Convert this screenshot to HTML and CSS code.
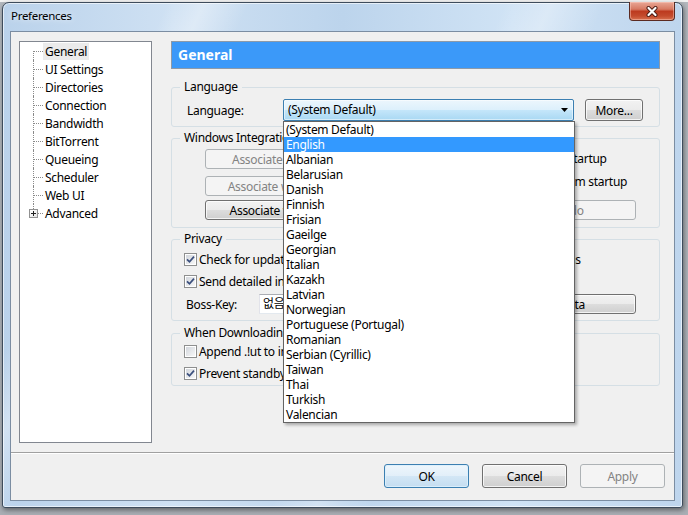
FILE: index.html
```html
<!DOCTYPE html>
<html lang="en">
<head>
<meta charset="utf-8">
<title>Preferences</title>
<link rel="stylesheet" href="styles.css">
</head>
<body>
<div class="window">
  <div class="titlebar">
    <span class="title">Preferences</span>
    <button class="close" type="button" aria-label="Close">
      <svg width="14" height="11" viewBox="0 0 14 11"><path d="M3.5 2 L10.5 9 M10.5 2 L3.5 9" fill="none" stroke="#4a1a12" stroke-width="4" stroke-linecap="round"/><path d="M3.5 2 L10.5 9 M10.5 2 L3.5 9" fill="none" stroke="#ffffff" stroke-width="2.2" stroke-linecap="round"/></svg>
    </button>
  </div>
  <div class="client">
    <div class="main">
      <div class="tree">
        <div class="node first"><span class="branch"></span><span class="node-label sel">General</span></div>
        <div class="node"><span class="branch"></span><span class="node-label">UI Settings</span></div>
        <div class="node"><span class="branch"></span><span class="node-label">Directories</span></div>
        <div class="node"><span class="branch"></span><span class="node-label">Connection</span></div>
        <div class="node"><span class="branch"></span><span class="node-label">Bandwidth</span></div>
        <div class="node"><span class="branch"></span><span class="node-label">BitTorrent</span></div>
        <div class="node"><span class="branch"></span><span class="node-label">Queueing</span></div>
        <div class="node"><span class="branch"></span><span class="node-label">Scheduler</span></div>
        <div class="node"><span class="branch"></span><span class="node-label">Web UI</span></div>
        <div class="node last"><span class="branch"><span class="plus"><svg width="9" height="9" viewBox="0 0 9 9"><path d="M2 4.5 H7 M4.5 2 V7" stroke="#1f1f1f" stroke-width="1"/></svg></span></span><span class="node-label">Advanced</span></div>
      </div>

      <div class="panel">
        <div class="panel-header">General</div>

        <div class="group g-lang">
          <div class="group-title">Language</div>
          <div class="lang-row">
            <span class="lang-label">Language:</span>
            <div class="combo">
              <span class="combo-text">(System Default)</span>
              <svg class="combo-arrow" width="7" height="4" viewBox="0 0 7 4"><path d="M0 0 H7 L3.5 4 Z" fill="#000"/></svg>
              <ul class="dropdown">
                <li>(System Default)</li>
                <li class="hl">English</li>
                <li>Albanian</li>
                <li>Belarusian</li>
                <li>Danish</li>
                <li>Finnish</li>
                <li>Frisian</li>
                <li>Gaeilge</li>
                <li>Georgian</li>
                <li>Italian</li>
                <li>Kazakh</li>
                <li>Latvian</li>
                <li>Norwegian</li>
                <li>Portuguese (Portugal)</li>
                <li>Romanian</li>
                <li>Serbian (Cyrillic)</li>
                <li>Taiwan</li>
                <li>Thai</li>
                <li>Turkish</li>
                <li>Valencian</li>
              </ul>
            </div>
            <button class="btn more" type="button">More...</button>
          </div>
        </div>

        <div class="group g-wi">
          <div class="group-title">Windows Integration</div>
          <div class="wi-cols">
            <div class="wi-left">
              <button class="btn dis wi-btn" type="button">Associate with .torrent files</button>
              <button class="btn dis wi-btn b2" type="button">Associate with .btsearch files</button>
              <button class="btn wi-btn b3" type="button">Associate with magnet URIs</button>
            </div>
            <div class="wi-right">
              <div class="check"><span class="cb"><svg width="9" height="9" viewBox="0 0 9 9"><path d="M1 4.3 L3.5 6.8 L8 1.6" fill="none" stroke="#3b4f7d" stroke-width="1.7"/></svg></span><span class="ctext">Check association on startup</span></div>
              <div class="check r2"><span class="cb"></span><span class="ctext">Start µTorrent on system startup</span></div>
              <button class="btn dis full r3" type="button">Association Undo</button>
            </div>
          </div>
        </div>

        <div class="group g-priv">
          <div class="group-title">Privacy</div>
          <div class="prow p1">
            <div class="check left"><span class="cb"><svg width="9" height="9" viewBox="0 0 9 9"><path d="M1 4.3 L3.5 6.8 L8 1.6" fill="none" stroke="#3b4f7d" stroke-width="1.7"/></svg></span><span class="ctext">Check for updates automatically</span></div>
            <div class="check"><span class="cb"></span><span class="ctext">Update to beta versions</span></div>
          </div>
          <div class="prow p2">
            <div class="check left"><span class="cb"><svg width="9" height="9" viewBox="0 0 9 9"><path d="M1 4.3 L3.5 6.8 L8 1.6" fill="none" stroke="#3b4f7d" stroke-width="1.7"/></svg></span><span class="ctext">Send detailed info when checking for updates</span></div>
            <div></div>
          </div>
          <div class="prow p3">
            <div class="boss"><span class="boss-label">Boss-Key:</span><span class="hotkey">없음</span></div>
            <div class="right-btn"><button class="btn full" type="button">Clear Private Data</button></div>
          </div>
        </div>

        <div class="group g-dl">
          <div class="group-title">When Downloading</div>
          <div class="check left d1"><span class="cb"></span><span class="ctext">Append .!ut to incomplete files</span></div>
          <div class="check left d2"><span class="cb"><svg width="9" height="9" viewBox="0 0 9 9"><path d="M1 4.3 L3.5 6.8 L8 1.6" fill="none" stroke="#3b4f7d" stroke-width="1.7"/></svg></span><span class="ctext">Prevent standby if active torrents</span></div>
        </div>
      </div>
    </div>

    <div class="sep"></div>
    <div class="footer">
      <button class="btn foot default" type="button">OK</button>
      <button class="btn foot" type="button">Cancel</button>
      <button class="btn foot dis" type="button">Apply</button>
    </div>
  </div>
</div>
</body>
</html>
```

FILE: styles.css
```css
* { box-sizing: border-box; }

html, body { margin: 0; padding: 0; }

body {
  width: 688px;
  height: 515px;
  overflow: hidden;
  background: linear-gradient(#f2f2f2 0, #f2f2f2 2px, #b3b8be 2px, #a9aeb4 100%);
  font-family: "Noto Sans", "Noto Sans CJK KR", sans-serif;
  font-size: 12px;
  letter-spacing: -0.3px;
  color: #000;
}

.window {
  margin: 2px 0 0 2px;
  width: 681px;
  height: 506px;
  border: 1px solid #3e4c5c;
  border-radius: 7px 7px 3px 3px;
  padding: 0 7px 6px;
  display: flex;
  flex-direction: column;
  background:
    linear-gradient(115deg, rgba(255,255,255,0) 0 18%, rgba(255,255,255,.35) 22%, rgba(255,255,255,0) 27%, rgba(255,255,255,0) 55%, rgba(255,255,255,.3) 60%, rgba(255,255,255,0) 66%),
    linear-gradient(to right, #bad2eb, #cfe1f3 25%, #bcd4ec 50%, #d0e3f5 75%, #bed5ed);
  box-shadow: inset 0 0 0 1px rgba(255,255,255,.6), 1px 2px 5px rgba(0,0,0,.45);
}

.titlebar {
  height: 28px;
  display: flex;
  justify-content: space-between;
  align-items: flex-start;
}

.title {
  margin: 5px 0 0 1px;
  font-size: 11.5px;
  line-height: 16px;
  color: #000;
  text-shadow: 0 0 6px rgba(255,255,255,.9);
}

.close {
  width: 46px;
  height: 19px;
  margin-top: -1px;
  padding: 0;
  border: 1px solid #5b2a21;
  border-top: none;
  border-radius: 0 0 4px 4px;
  background: linear-gradient(#e9a796 0%, #d77962 40%, #bd3a1f 52%, #c44b2d 78%, #d8714f 100%);
  box-shadow: inset 0 0 0 1px rgba(255,210,200,.45);
  display: flex;
  align-items: center;
  justify-content: center;
}

.client {
  height: 470px;
  border: 1px solid #7b8da2;
  background: #f0f0f0;
  display: flex;
  flex-direction: column;
}

.main {
  display: flex;
  align-items: flex-start;
  gap: 19px;
  padding: 9px 14px 0 8px;
}

/* tree */
.tree {
  width: 133px;
  height: 402px;
  flex: none;
  border: 1px solid #828790;
  background: #fff;
  padding-left: 9px;
}

.node {
  height: 18px;
  display: flex;
  align-items: center;
}

.branch {
  position: relative;
  width: 14px;
  height: 18px;
  flex: none;
}

.branch::before {
  content: "";
  position: absolute;
  left: 4px;
  top: 0;
  bottom: 0;
  border-left: 1px dotted #8a8a8a;
}

.node.first .branch::before { top: 9px; }
.node.last .branch::before { bottom: 9px; }

.branch::after {
  content: "";
  position: absolute;
  left: 5px;
  right: 0;
  top: 9px;
  border-top: 1px dotted #8a8a8a;
}

.plus {
  position: absolute;
  left: 0;
  top: 5px;
  width: 9px;
  height: 9px;
  z-index: 1;
  border: 1px solid #919191;
  background: linear-gradient(135deg, #ffffff, #e4e4e4);
  display: flex;
}

.plus svg { margin: -1px; }

.node-label {
  padding: 0 2px;
  line-height: 17px;
  white-space: nowrap;
}

.node-label.sel { background: #ebebeb; }

/* right panel */
.panel {
  width: 489px;
  flex: none;
}

.panel-header {
  height: 28px;
  border: 1px solid #8d9aa8;
  background: #3b99f9;
  color: #fff;
  font-weight: 700;
  font-size: 14px;
  letter-spacing: 0;
  line-height: 25px;
  padding-left: 6px;
}

.group {
  border: 1px solid #d5dfe5;
  border-radius: 3px;
}

.group-title {
  width: max-content;
  height: 16px;
  margin: -9px 0 0 8px;
  padding: 0 4px;
  background: #f0f0f0;
  line-height: 16px;
}

.g-lang { margin-top: 18px; padding-bottom: 5px; }

.lang-row {
  margin-top: 4px;
  height: 22px;
  padding-left: 15px;
  display: flex;
  align-items: center;
}

.lang-label { width: 96px; flex: none; }

.combo {
  position: relative;
  width: 291px;
  height: 22px;
  flex: none;
  border: 1px solid #3c7fb1;
  border-radius: 2px;
  background: linear-gradient(#ecf6fd 0%, #ddf0fc 48%, #c4e6fa 52%, #a9d8f3 100%);
  box-shadow: inset 0 0 0 1px rgba(255,255,255,.5);
  padding: 0 5px 0 4px;
  display: flex;
  align-items: center;
  justify-content: space-between;
  line-height: 20px;
}

.dropdown {
  position: absolute;
  left: -1px;
  top: 21px;
  width: 292px;
  margin: 0;
  padding: 0;
  list-style: none;
  border: 1px solid #646464;
  background: #fff;
  box-shadow: 2px 2px 3px rgba(0,0,0,.3);
  z-index: 10;
}

.dropdown li {
  height: 15px;
  line-height: 15px;
  padding-left: 2px;
  white-space: nowrap;
}

.dropdown li.hl { background: #3399ff; color: #fff; }

/* buttons */
.btn {
  font-family: inherit;
  font-size: 12px;
  letter-spacing: -0.3px;
  color: #000;
  padding: 0;
  border: 1px solid #707070;
  border-radius: 3px;
  background: linear-gradient(#f2f2f2 0%, #ebebeb 50%, #dddddd 50%, #cfcfcf 100%);
  box-shadow: inset 0 0 0 1px rgba(255,255,255,.75);
  white-space: nowrap;
  overflow: hidden;
}

.btn.dis {
  border-color: #adb2b5;
  background: #f4f4f4;
  color: #838383;
  box-shadow: none;
}

.btn.default {
  border-color: #3c7fb1;
  background: linear-gradient(#eef6fc 0%, #e2eff9 50%, #d3e7f6 50%, #c5ddf0 100%);
  box-shadow: inset 0 0 0 1px rgba(220,240,252,.9);
}

.more { width: 58px; height: 22px; margin-left: 11px; }

/* windows integration */
.g-wi { margin-top: 11px; padding-bottom: 7px; }

.wi-cols {
  display: grid;
  grid-template-columns: 266px 221px;
}

.wi-left {
  padding-left: 33px;
  margin-top: 3px;
  display: flex;
  flex-direction: column;
}

.wi-btn { width: 198px; height: 20px; }
.wi-btn.b2 { margin-top: 7px; }
.wi-btn.b3 { margin-top: 4px; }

.wi-right {
  margin-top: 4px;
  padding-right: 23px;
  display: flex;
  flex-direction: column;
}

.wi-right .r2 { margin-top: 7px; }
.wi-right .r3 { margin-top: 11px; }

.btn.full { width: 100%; height: 20px; }

/* check boxes */
.check {
  height: 16px;
  display: flex;
  align-items: center;
  white-space: nowrap;
}

.check.left { padding-left: 12px; }

.cb {
  width: 13px;
  height: 13px;
  flex: none;
  padding: 1px;
  border: 1px solid #8e8f8f;
  background: linear-gradient(135deg, #d2d6dc, #f7f7f7) content-box, #fff;
  display: flex;
  align-items: center;
  justify-content: center;
}

.ctext { margin-left: 2px; }

/* privacy */
.g-priv { margin-top: 11px; padding-bottom: 6px; }

.prow {
  display: grid;
  grid-template-columns: 266px 221px;
  align-items: center;
}

.p1 { margin-top: 4px; }
.p2 { margin-top: 6px; }
.p3 { margin-top: 5px; }

.boss {
  padding-left: 14px;
  display: flex;
  align-items: center;
}

.boss-label { width: 73px; flex: none; }

.hotkey {
  width: 170px;
  height: 20px;
  flex: none;
  border: 1px solid #abadb3;
  border-color: #abadb3 #dbdfe6 #e3e9ef #e2e3ea;
  background: #fff;
  padding-left: 3px;
  line-height: 18px;
}

.right-btn { padding-right: 23px; }

/* when downloading */
.g-dl { margin-top: 12px; padding-bottom: 4px; }
.g-dl .d1 { margin-top: 2px; }
.g-dl .d2 { margin-top: 6px; }

/* footer */
.sep {
  margin-top: 9px;
  border-top: 1px solid #a0a0a0;
  border-bottom: 1px solid #ffffff;
}

.footer {
  display: flex;
  justify-content: flex-end;
  gap: 13px;
  padding: 10px 9px 0 0;
}

.btn.foot { width: 85px; height: 24px; }
```
